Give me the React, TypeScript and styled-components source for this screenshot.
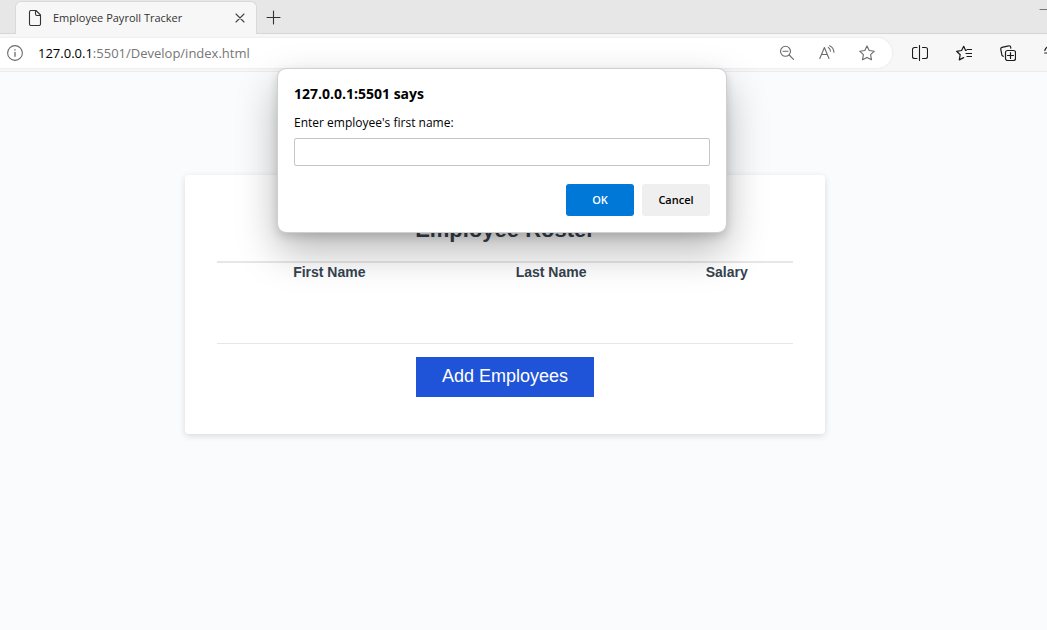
import React, { useState } from 'react';
import styled, { createGlobalStyle } from 'styled-components';

const UI_FONT = '"Open Sans", "Noto Sans", sans-serif';
const PAGE_FONT = '"Liberation Sans", Arial, sans-serif';

const GlobalStyle = createGlobalStyle`
  *, *::before, *::after { box-sizing: border-box; }
  body { margin: 0; background: #fafbfd; }
  button, input { font: inherit; }
`;

const Browser = styled.div`
  position: relative;
  display: flex;
  flex-direction: column;
  min-height: 100vh;
  overflow: hidden;
  font-family: ${UI_FONT};
`;

const TabStrip = styled.div`
  display: flex;
  align-items: flex-end;
  height: 34px;
  padding-left: 15px;
  background: #e7e7e7;
  box-shadow: inset 0 -1px #d5d5d5;
`;

const Tab = styled.div`
  display: flex;
  align-items: center;
  width: 242px;
  height: 33px;
  padding: 0 8px 0 11px;
  border: 1px solid #d9d9d9;
  border-bottom: 0;
  border-radius: 6px 6px 0 0;
  background: #f7f7f7;
  color: #333;
`;

const TabTitle = styled.span`
  flex: 1;
  padding-left: 10px;
  font-size: 11px;
  line-height: 16px;
  white-space: nowrap;
`;

const IconButton = styled.button<{ $color?: string }>`
  display: flex;
  flex: none;
  align-items: center;
  justify-content: center;
  width: 16px;
  height: 16px;
  padding: 0;
  border: 0;
  background: none;
  color: ${(p) => p.$color ?? '#1b1b1b'};
  svg { flex: none; }
`;

const NewTab = styled(IconButton)`
  width: 34px;
  height: 32px;
`;

const Minimize = styled(IconButton)`
  width: 8px;
  height: 18px;
  margin: 0 0 16px auto;
`;

const Toolbar = styled.div`
  display: flex;
  align-items: center;
  height: 38px;
  background: #f7f7f7;
  border-bottom: 1px solid #ececec;
`;

const AddressBar = styled.div`
  display: flex;
  flex: 1;
  align-items: center;
  gap: 24px;
  height: 30px;
  padding: 0 17px 0 7px;
  border-radius: 0 15px 15px 0;
  background: #fff;
  box-shadow: 0 0 3px rgba(0, 0, 0, 0.08);
`;

const Address = styled.input`
  grid-area: 1 / 1;
  width: 100%;
  border: 0;
  padding: 0;
  background: none;
  color: transparent;
  outline: 0;
`;

const AddressField = styled.label`
  display: grid;
  flex: 1;
  margin-left: -9px;
  font-size: 13px;
  line-height: 20px;
  color: #767676;
`;

const AddressText = styled.span`
  grid-area: 1 / 1;
  white-space: nowrap;
  b { font-weight: 400; color: #000; }
`;

const Actions = styled.div`
  display: flex;
  flex: none;
  gap: 28px;
  width: 155px;
  padding-left: 20px;
  overflow: hidden;
`;

const Page = styled.main`
  flex: 1;
  padding: 103px 37px 32px 0;
  background: #fafbfd;
  font-family: ${PAGE_FONT};
  color: #36424f;
`;

const Card = styled.section`
  display: flex;
  flex-direction: column;
  align-items: center;
  max-width: 640px;
  margin: 0 auto;
  padding: 43px 32px 37px;
  border-radius: 4px;
  background: #fff;
  box-shadow: 0 2px 6px rgba(40, 50, 70, 0.16);
`;

const CardTitle = styled.h2`
  margin: 0 0 19px;
  font-size: 22px;
  line-height: 24px;
`;

const Roster = styled.table`
  width: 100%;
  table-layout: fixed;
  border-collapse: separate;
  border-spacing: 0;
  border-top: 2px solid #e6e6e6;
  border-bottom: 1px solid #e6e6e6;
  th {
    padding: 0;
    font-size: 14px;
    line-height: 18px;
  }
  td { height: 62px; padding: 0; }
`;

const Column = styled.col<{ $share: number }>`
  width: ${(p) => p.$share}%;
`;

const AddButton = styled.button`
  width: 178px;
  height: 40px;
  margin-top: 13px;
  padding: 0 0 2px;
  border: 0;
  background: #2054d8;
  color: #fff;
  font-size: 18px;
`;

const DialogLayer = styled.div`
  position: absolute;
  top: 68px;
  left: 0;
  right: 0;
  display: flex;
  justify-content: center;
  padding-right: 43px;
`;

const Dialog = styled.form`
  width: 450px;
  padding: 16px;
  border: 1px solid #cfcfcf;
  border-radius: 9px;
  background: #fff;
  background-clip: padding-box;
  box-shadow: 0 18px 40px rgba(0, 0, 0, 0.28), 0 4px 10px rgba(0, 0, 0, 0.14);
  color: #000;
  font-size: 12px;
  line-height: 18px;
`;

const DialogTitle = styled.h1`
  margin: 0 0 11px;
  font-size: 14px;
  line-height: 18px;
`;

const Prompt = styled.label`
  display: block;
`;

const PromptInput = styled.input`
  display: block;
  width: 100%;
  height: 28px;
  margin-top: 6px;
  padding: 0 8px;
  border: 1px solid #c6c6c6;
  border-radius: 2px;
  background: #fff;
  outline: 0;
`;

const DialogButtons = styled.div`
  display: flex;
  justify-content: flex-end;
  gap: 8px;
  margin-top: 18px;
`;

const DialogButton = styled.button<{ $primary?: boolean }>`
  width: 68px;
  height: 32px;
  padding: 0;
  border: 0;
  border-radius: 3px;
  background: ${(p) => (p.$primary ? '#0078d7' : '#efefef')};
  color: ${(p) => (p.$primary ? '#fff' : '#000')};
  font-size: 11px;
  font-weight: 600;
`;

type IconProps = { size?: number; box?: string; children: React.ReactNode };

const Icon = ({ size = 16, box = '0 0 16 16', children }: IconProps) => (
  <svg width={size} height={size} viewBox={box} fill="none" stroke="currentColor" strokeWidth="1.1" strokeLinecap="round" strokeLinejoin="round" aria-hidden="true">
    {children}
  </svg>
);

const FileIcon = () => (
  <Icon>
    <path d="M4 .5h5L13.5 5v9a1.5 1.5 0 0 1-1.5 1.5H4A1.5 1.5 0 0 1 2.500 14V2A1.500 1.500 0 0 1 4 .5ZM8.500.7V4A1.500 1.500 0 0 0 10 5.500h3.300" />
  </Icon>
);

const InfoIcon = () => (
  <Icon>
    <circle cx="8" cy="8" r="7.4" />
    <path d="M8 7.300v4M8 4.700v.3" strokeWidth="1.300" />
  </Icon>
);

const ZoomOutIcon = () => (
  <Icon>
    <circle cx="6.500" cy="6.300" r="5" />
    <path d="M4 6.300h5M10.200 10l4.300 4.300" />
  </Icon>
);

const ReadAloudIcon = () => (
  <Icon>
    <path d="M.8 13.500 5.400 2.500l4.600 11M2.500 9.500h5.800M9.300 2.600c1.300.7 2.100 1.900 2.200 3.600M10.600.7c2.500 1.100 4.200 3.500 4.300 6.600" />
  </Icon>
);

const StarIcon = () => (
  <Icon>
    <path d="m8 .9 2.200 4.600 5.100.7-3.700 3.500.9 5.100L8 12.400l-4.500 2.400.9-5.100L.7 6.200l5.100-.7L8 .9Z" />
  </Icon>
);

const SplitIcon = () => (
  <Icon>
    <path d="M5 2.500H2.500A2 2 0 0 0 .5 4.500v7a2 2 0 0 0 2 2H5M10.500 2.500h3a2 2 0 0 1 2 2v7a2 2 0 0 1-2 2h-3M7.500.5v15" />
  </Icon>
);

const FavoritesIcon = () => (
  <Icon>
    <path d="M10.300 5.500h-.7L7.700 1.300 5.600 5.500l-5 .8 3.600 3.400-.9 5.200 4.300-2.300M11 4.500h4.500M10 8.500h5.500M11 11.500h4.500" strokeWidth="1.200" />
  </Icon>
);

const CollectionsIcon = () => (
  <Icon>
    <path d="M3.200 11.300 2 10.500.8 4.300A1.600 1.600 0 0 1 2 2.400L8.600.8a1.600 1.600 0 0 1 2 1.200l.2 1.200" strokeWidth="1.200" />
    <rect x="5.500" y="5.500" width="10" height="10" rx="2" strokeWidth="1.200" />
    <path d="M10.500 7.500v6M7.500 10.500h6" strokeWidth="1.200" />
  </Icon>
);

const EssentialsIcon = () => (
  <Icon>
    <path d="M.7 8h14.600M.8 5.500C1.500 3 3.500 1.500 6 1.500h4c3 0 5 2.500 5 6.500s-2 6-5 6H6" strokeWidth="1.200" />
  </Icon>
);

export default function App() {
  const [name, setName] = useState('');
  return (
    <Browser>
      <GlobalStyle />
      <TabStrip>
        <Tab>
          <FileIcon />
          <TabTitle>Employee Payroll Tracker</TabTitle>
          <IconButton aria-label="Close tab" $color="#444">
            <Icon size={10} box="0 0 10 10"><path d="m1 1 8 8M9 1 1 9" /></Icon>
          </IconButton>
        </Tab>
        <NewTab aria-label="New tab" $color="#333">
          <Icon><path d="M7.500 1v13M1 7.500h13" /></Icon>
        </NewTab>
        <Minimize aria-label="Minimize" $color="#777">
          <Icon size={8} box="0 0 8 8"><path d="M1 4.500h7" /></Icon>
        </Minimize>
      </TabStrip>
      <Toolbar>
        <AddressBar>
          <IconButton aria-label="Site information" $color="#6a6a6a"><InfoIcon /></IconButton>
          <AddressField>
            <AddressText aria-hidden="true"><b>127.0.0.1</b>:5501/Develop/index.html</AddressText>
            <Address aria-label="Address" />
          </AddressField>
          <IconButton aria-label="Zoom out" $color="#6a6a6a"><ZoomOutIcon /></IconButton>
          <IconButton aria-label="Read aloud" $color="#6a6a6a"><ReadAloudIcon /></IconButton>
          <IconButton aria-label="Add to favorites" $color="#6a6a6a"><StarIcon /></IconButton>
        </AddressBar>
        <Actions>
          <IconButton aria-label="Split screen"><SplitIcon /></IconButton>
          <IconButton aria-label="Favorites"><FavoritesIcon /></IconButton>
          <IconButton aria-label="Collections"><CollectionsIcon /></IconButton>
          <IconButton aria-label="Browser essentials"><EssentialsIcon /></IconButton>
        </Actions>
      </Toolbar>
      <Page>
        <Card>
          <CardTitle>Employee Roster</CardTitle>
          <Roster>
            <colgroup>
              <Column $share={39} />
              <Column $share={38} />
              <Column $share={23} />
            </colgroup>
            <thead>
              <tr>
                <th scope="col">First Name</th>
                <th scope="col">Last Name</th>
                <th scope="col">Salary</th>
              </tr>
            </thead>
            <tbody>
              <tr><td colSpan={3} /></tr>
            </tbody>
          </Roster>
          <AddButton type="button">Add Employees</AddButton>
        </Card>
      </Page>
      <DialogLayer>
        <Dialog role="dialog" aria-labelledby="dialog-title" onSubmit={(e) => e.preventDefault()}>
          <DialogTitle id="dialog-title">127.0.0.1:5501 says</DialogTitle>
          <Prompt htmlFor="first-name">Enter employee's first name:</Prompt>
          <PromptInput id="first-name" value={name} onChange={(e) => setName(e.target.value)} />
          <DialogButtons>
            <DialogButton type="submit" $primary>OK</DialogButton>
            <DialogButton type="button">Cancel</DialogButton>
          </DialogButtons>
        </Dialog>
      </DialogLayer>
    </Browser>
  );
}
